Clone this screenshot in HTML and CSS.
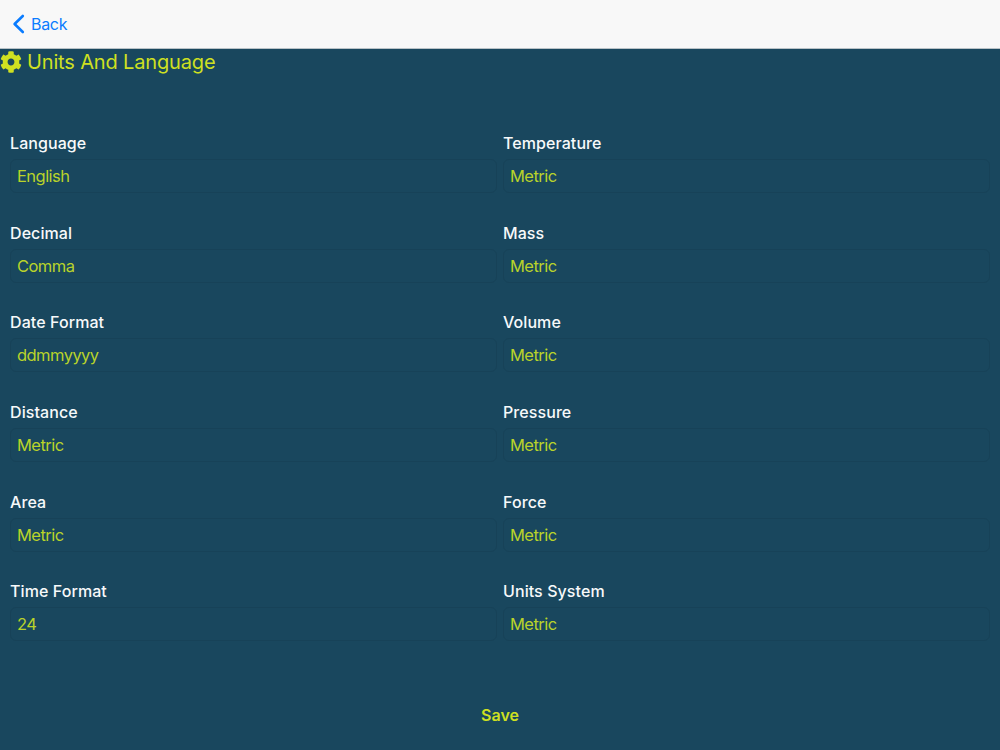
FILE: index.html
```html
<!DOCTYPE html>
<html lang="en">
<head>
<meta charset="utf-8">
<title>Units And Language</title>
<link rel="stylesheet" href="styles.css">
</head>
<body>
<header class="topbar">
  <a class="back">
    <svg class="chevron" viewBox="0 0 13 20" width="13" height="20"><path d="M10.8 2 2.6 10l8.2 8" fill="none" stroke="#0a7cff" stroke-width="2.6" stroke-linecap="round" stroke-linejoin="round"/></svg>
    <span>Back</span>
  </a>
</header>
<main class="content">
  <h1 class="title">
    <svg class="gear" viewBox="0 0 512 512" width="22" height="22"><path fill="#cfe021" d="M487.4 315.7l-42.6-24.6c4.3-23.2 4.3-47 0-70.2l42.6-24.6c4.9-2.8 7.1-8.6 5.5-14-11.1-35.6-30-67.8-54.7-94.6-3.8-4.1-10-5.1-14.8-2.3L380.8 110c-17.9-15.4-38.5-27.3-60.8-35.1V25.8c0-5.6-3.9-10.5-9.4-11.7-36.7-8.2-74.3-7.8-109.2 0-5.5 1.2-9.4 6.1-9.4 11.7V75c-22.2 7.9-42.8 19.8-60.8 35.1L88.7 85.5c-4.9-2.8-11-1.9-14.8 2.3-24.7 26.7-43.6 58.9-54.7 94.6-1.7 5.4.6 11.2 5.5 14L67.3 221c-4.3 23.2-4.3 47 0 70.2l-42.6 24.6c-4.9 2.8-7.1 8.6-5.5 14 11.1 35.6 30 67.8 54.7 94.6 3.8 4.1 10 5.1 14.8 2.3l42.6-24.6c17.9 15.4 38.5 27.3 60.8 35.1v49.2c0 5.6 3.9 10.5 9.4 11.7 36.7 8.2 74.3 7.8 109.2 0 5.5-1.2 9.4-6.1 9.4-11.7v-49.2c22.2-7.9 42.8-19.8 60.8-35.1l42.6 24.6c4.9 2.8 11 1.9 14.8-2.3 24.7-26.7 43.6-58.9 54.7-94.6 1.5-5.5-.7-11.3-5.6-14.1zM256 336c-44.1 0-80-35.9-80-80s35.9-80 80-80 80 35.9 80 80-35.9 80-80 80z"/></svg>
    <span>Units And Language</span>
  </h1>
  <div class="form-grid">
    <div class="field"><div class="label">Language</div><div class="box">English</div></div>
    <div class="field"><div class="label">Temperature</div><div class="box">Metric</div></div>
    <div class="field"><div class="label">Decimal</div><div class="box">Comma</div></div>
    <div class="field"><div class="label">Mass</div><div class="box">Metric</div></div>
    <div class="field"><div class="label">Date Format</div><div class="box">ddmmyyyy</div></div>
    <div class="field"><div class="label">Volume</div><div class="box">Metric</div></div>
    <div class="field"><div class="label">Distance</div><div class="box">Metric</div></div>
    <div class="field"><div class="label">Pressure</div><div class="box">Metric</div></div>
    <div class="field"><div class="label">Area</div><div class="box">Metric</div></div>
    <div class="field"><div class="label">Force</div><div class="box">Metric</div></div>
    <div class="field"><div class="label">Time Format</div><div class="box">24</div></div>
    <div class="field"><div class="label">Units System</div><div class="box">Metric</div></div>
  </div>
  <div class="actions"><button class="save" type="button">Save</button></div>
</main>
</body>
</html>
```
FILE: styles.css
```css
* { box-sizing: border-box; }
html, body { margin: 0; height: 100%; }
body {
  width: 1000px;
  height: 750px;
  overflow: hidden;
  background: #19475e;
  font-family: Inter, "Liberation Sans", sans-serif;
  display: flex;
  flex-direction: column;
}
.topbar {
  height: 49px;
  flex: none;
  background: #f8f8f8;
  border-bottom: 1px solid #b9c2c7;
  display: flex;
  align-items: center;
  padding-left: 12px;
}
.back {
  display: flex;
  align-items: center;
  gap: 6px;
  color: #0a7cff;
  font-size: 16px;
  letter-spacing: -0.3px;
  line-height: 22px;
}
.content { flex: 1; display: flex; flex-direction: column; }
.title {
  margin: 0;
  height: 26px;
  display: flex;
  align-items: center;
  gap: 5px;
  font-size: 20px;
  letter-spacing: -0.15px;
  font-weight: 400;
  color: #cfe021;
}
.gear { flex: none; }
.form-grid {
  margin-top: 56px;
  padding: 0 10px;
  display: grid;
  grid-template-columns: 487px 487px;
  column-gap: 6px;
  row-gap: 27.65px;
}
.field { height: 62px; display: flex; flex-direction: column; }
.label {
  height: 24px;
  margin-bottom: 4px;
  line-height: 24px;
  font-size: 16px;
  font-weight: 550;
  letter-spacing: 0.08px;
  color: #f7f9fa;
}
.box {
  height: 34px;
  padding: 0 6px;
  line-height: 32px;
  border: 1px solid #174258;
  border-radius: 6px;
  font-size: 16.5px;
  letter-spacing: -0.55px;
  color: #b9d32a;
}
.actions { display: flex; justify-content: center; margin-top: 62px; }
.save {
  padding: 0;
  border: 0;
  background: none;
  font: 600 16px/24px Inter, "Liberation Sans", sans-serif;
  color: #cfe021;
}
```
